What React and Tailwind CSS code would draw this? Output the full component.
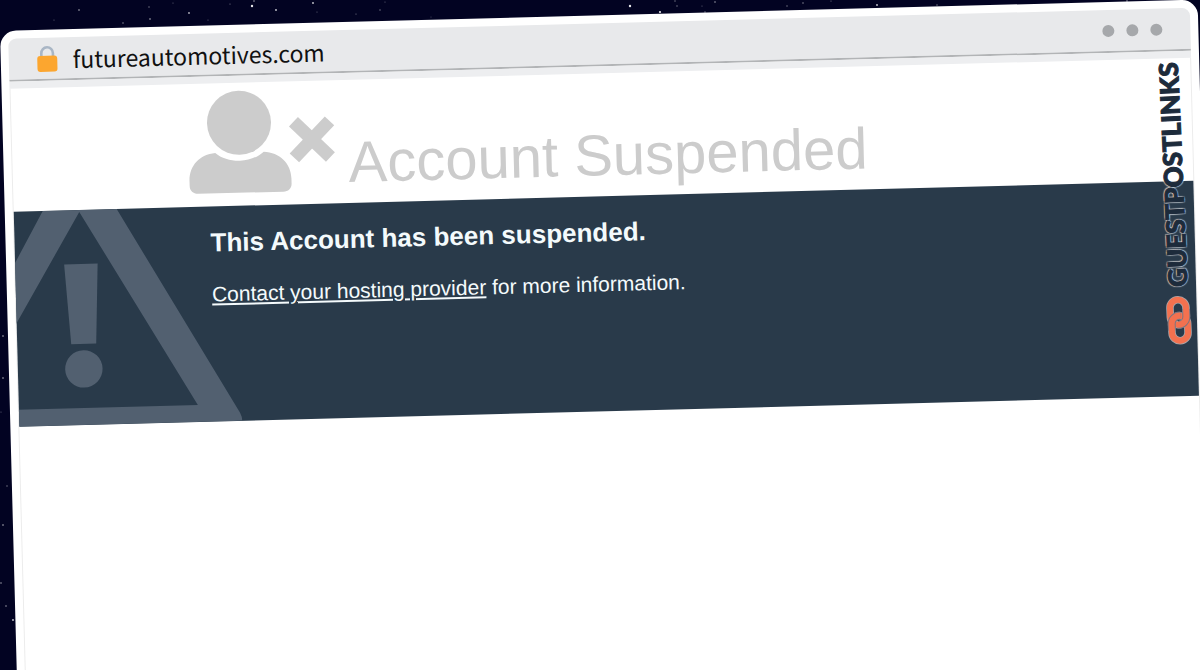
import React from 'react';

// faint stars behind the window: [x, y, radius, opacity]
const STARS = [
  [79, 10, 0.8, 0.7], [54, 20, 0.6, 0.4], [123, 23, 0.7, 0.6], [149, 7, 0.7, 0.5],
  [150, 19, 0.8, 0.7], [189, 13, 0.9, 0.7], [173, 3, 0.6, 0.4], [208, 20, 0.6, 0.4],
  [230, 4, 0.6, 0.5], [252, 6, 1.2, 0.9], [254, 1, 0.8, 0.6], [276, 10, 0.9, 0.8],
  [313, 3, 0.9, 0.8], [317, 12, 0.6, 0.4], [356, 14, 0.6, 0.5], [380, 10, 0.7, 0.5],
  [385, 2, 0.6, 0.4], [431, 17, 0.6, 0.3], [630, 6, 1.2, 0.9], [660, 12, 1.1, 0.9],
  [675, 1, 0.7, 0.5], [677, 6, 0.7, 0.5], [702, 6, 0.6, 0.4], [715, 2, 0.8, 0.6],
  [705, 12, 0.7, 0.5], [787, 6, 0.7, 0.5], [803, 3, 0.7, 0.6], [831, 1, 0.6, 0.5],
  [877, 5, 0.9, 0.8], [937, 5, 0.7, 0.5], [1127, 1, 0.8, 0.6],
  [3, 336, 0.8, 0.7], [3, 378, 0.8, 0.7], [1, 412, 0.6, 0.4], [7, 486, 0.7, 0.5],
  [3, 525, 0.8, 0.7], [1, 583, 0.8, 0.6], [6, 606, 0.8, 0.6], [13, 620, 0.9, 0.8],
];

function Stars() {
  return (
    <svg className="absolute inset-0 h-full w-full" aria-hidden="true">
      {STARS.map(([x, y, r, o]) => (
        <circle key={`${x}-${y}`} cx={x} cy={y} r={r} fill="#ffffff" opacity={o} />
      ))}
    </svg>
  );
}

function LockIcon() {
  return (
    <svg width="22" height="28" viewBox="0 0 22 28" aria-hidden="true">
      <path d="M4.700 13V8.500a5.800 6 0 0 1 11.600 0V13" fill="none" stroke="#a9b6c5" strokeWidth="2.600" />
      <rect x="0.500" y="11" width="20" height="16" rx="3" fill="#fca62f" />
    </svg>
  );
}

function UserTimesIcon() {
  return (
    <svg width="148" height="106" viewBox="0 0 148 106" fill="#cccccc" aria-hidden="true">
      <circle cx="51.500" cy="34" r="32" />
      <path d="M27 63.500C11 64.500 .5 76 .5 91v5c0 5 3.500 8 8.500 8h85c5 0 8.500-3 8.500-8v-5c0-15-11-26.500-27-27.500C69 69 60.500 72 51.500 72S33 69 27 63.500Z" />
      <g transform="translate(124 52.500) rotate(45)">
        <rect x="-25.500" y="-6.500" width="51" height="13" />
        <rect x="-6.500" y="-25.500" width="13" height="51" />
      </g>
    </svg>
  );
}

function WarningSign() {
  return (
    <svg width="224" height="215" viewBox="1 0 224 215" fill="#526070" aria-hidden="true">
      <path d="M30 0H104L222 207Q224 211 224 215H0V198H180L66.500 2L0 113V53Z" />
      <path d="M50 54H83.500L80 134H55Z" />
      <circle cx="67" cy="159" r="18.700" />
    </svg>
  );
}

function ChainIcon() {
  return (
    <svg width="26" height="50" viewBox="0 0 26 50" fill="none" aria-hidden="true">
      <g stroke="#a9a3a6" strokeWidth="7.600">
        <rect x="4.500" y="4.500" width="16" height="25" rx="8" />
        <rect x="5.500" y="20.500" width="16" height="25" rx="8" />
      </g>
      <rect x="5.500" y="20.500" width="16" height="25" rx="8" stroke="#f4714f" strokeWidth="6" />
      {/* upper link crosses in front on the right, lower link on the left */}
      <path d="M20.500 14V21.500a8 8 0 0 1-9 8" stroke="#7d7680" strokeWidth="8" />
      <rect x="4.500" y="4.500" width="16" height="25" rx="8" stroke="#f4714f" strokeWidth="6" />
      <path d="M5.500 35V28.500a8 8 0 0 1 9-8" stroke="#7d7680" strokeWidth="8" />
      <path d="M5.500 37V28.500a8 8 0 0 1 9-8" stroke="#f4714f" strokeWidth="6" />
    </svg>
  );
}

function AddressBar() {
  return (
    <div className="flex h-[50px] flex-col border-b-[7px] border-[#edeef0]">
      <div className="flex flex-1 items-center justify-between rounded-t-lg border-b-2 border-[#b2b4b6] bg-[#e8e9eb] pr-7 pl-7">
        <div className="flex items-center gap-3.5">
          <LockIcon />
          <span className="font-['Noto_Sans_CJK_SC',sans-serif] text-[23px] leading-8 text-[#111111]">
            futureautomotives.com
          </span>
        </div>
        <div className="flex gap-3">
          <span className="size-3 rounded-full bg-[#a6a8ab]" />
          <span className="size-3 rounded-full bg-[#a6a8ab]" />
          <span className="size-3 rounded-full bg-[#a6a8ab]" />
        </div>
      </div>
    </div>
  );
}

// vertical brand mark, reads bottom to top over the page
function SideBrand() {
  return (
    <div className="absolute top-1 right-1.5 flex rotate-[-1deg] flex-col items-center gap-2">
      <span className="rotate-180 font-['Lato',sans-serif] text-[26px] leading-7 font-black text-[#1d2b3b] [-webkit-text-stroke:1px_#1d2b3b] [text-shadow:1px_1px_1px_#ffffff99,-1px_1px_1px_#ffffff99,1px_-1px_1px_#ffffff99,-1px_-1px_1px_#ffffff99] [writing-mode:vertical-rl]">
        GUESTPOSTLINKS
      </span>
      <ChainIcon />
    </div>
  );
}

export default function App() {
  return (
    <div className="relative h-screen overflow-hidden bg-[#020322] pt-[31px] font-['Liberation_Sans',Arial,sans-serif]">
      <Stars />
      <div className="relative mr-0.5 min-h-[120vh] origin-top-left rotate-[-1.5deg] rounded-2xl bg-white p-2">
        <AddressBar />
        <main className="relative min-h-screen border-x border-[#ececec]">
          <header className="flex h-[123px] items-start gap-3 pt-1.5 pl-44 text-[#cccccc]">
            <UserTimesIcon />
            <h1 className="pt-10 text-[58px] leading-[72px]">Account Suspended</h1>
          </header>
          <section className="flex h-[215px] bg-[#293a4a] text-[#f4fafc]">
            <WarningSign />
            <div className="-ml-7 pt-5">
              <h2 className="text-[26px] leading-8 font-bold">This Account has been suspended.</h2>
              <p className="pt-5 text-[21px] leading-8">
                <a href="#contact" className="underline">Contact your hosting provider</a> for more information.
              </p>
            </div>
          </section>
          <SideBrand />
        </main>
      </div>
    </div>
  );
}
